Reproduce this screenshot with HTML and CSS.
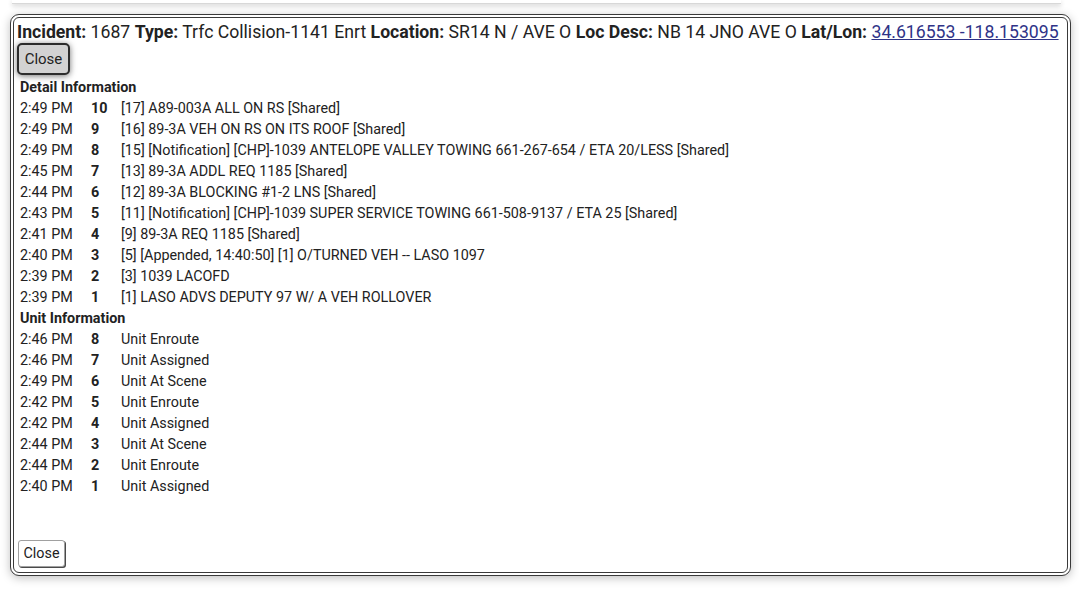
FILE: index.html
```html
<!DOCTYPE html>
<html>
<head>
<meta charset="utf-8">
<link rel="stylesheet" href="styles.css">
</head>
<body>
<div class="topcard"></div>
<div class="dialog">
  <div class="header"><b>Incident:</b> 1687 <b>Type:</b> Trfc Collision-1141 Enrt <b>Location:</b> SR14 N / AVE O <b>Loc Desc:</b> NB 14 JNO AVE O <b>Lat/Lon:</b> <a href="#" class="ll">34.616553 -118.153095</a></div>
  <div class="btnrow"><button class="close-top">Close</button></div>
  <div class="info">
    <div class="title">Detail Information</div>
    <div class="grid">
      <span>2:49 PM</span><b>10</b><span>[17] A89-003A ALL ON RS [Shared]</span>
      <span>2:49 PM</span><b>9</b><span>[16] 89-3A VEH ON RS ON ITS ROOF [Shared]</span>
      <span>2:49 PM</span><b>8</b><span>[15] [Notification] [CHP]-1039 ANTELOPE VALLEY TOWING 661-267-654 / ETA 20/LESS [Shared]</span>
      <span>2:45 PM</span><b>7</b><span>[13] 89-3A ADDL REQ 1185 [Shared]</span>
      <span>2:44 PM</span><b>6</b><span>[12] 89-3A BLOCKING #1-2 LNS [Shared]</span>
      <span>2:43 PM</span><b>5</b><span>[11] [Notification] [CHP]-1039 SUPER SERVICE TOWING 661-508-9137 / ETA 25 [Shared]</span>
      <span>2:41 PM</span><b>4</b><span>[9] 89-3A REQ 1185 [Shared]</span>
      <span>2:40 PM</span><b>3</b><span>[5] [Appended, 14:40:50] [1] O/TURNED VEH -- LASO 1097</span>
      <span>2:39 PM</span><b>2</b><span>[3] 1039 LACOFD</span>
      <span>2:39 PM</span><b>1</b><span>[1] LASO ADVS DEPUTY 97 W/ A VEH ROLLOVER</span>
    </div>
    <div class="title">Unit Information</div>
    <div class="grid">
      <span>2:46 PM</span><b>8</b><span>Unit Enroute</span>
      <span>2:46 PM</span><b>7</b><span>Unit Assigned</span>
      <span>2:49 PM</span><b>6</b><span>Unit At Scene</span>
      <span>2:42 PM</span><b>5</b><span>Unit Enroute</span>
      <span>2:42 PM</span><b>4</b><span>Unit Assigned</span>
      <span>2:44 PM</span><b>3</b><span>Unit At Scene</span>
      <span>2:44 PM</span><b>2</b><span>Unit Enroute</span>
      <span>2:40 PM</span><b>1</b><span>Unit Assigned</span>
    </div>
  </div>
  <div class="footer"><button class="close-bottom">Close</button></div>
</div>
</body>
</html>
```
FILE: styles.css
```css
html, body {
  margin: 0;
  padding: 0;
  background: #ffffff;
}
body {
  font-family: Roboto, "Liberation Sans", sans-serif;
  color: #222;
  height: 589px;
  overflow: hidden;
}
.topcard {
  height: 3px;
  margin: 0 18px 0 12px;
  background: #fff;
  border-bottom: 1px solid #d8d8d8;
  box-shadow: 0 2px 5px rgba(0,0,0,0.18);
}
.dialog {
  box-sizing: border-box;
  margin: 10px 8px 0 10px;
  height: 562px;
  border: 4px double #3a3a3a;
  border-radius: 9px;
  background: #fff;
  box-shadow: 0 2px 10px rgba(0,0,0,0.25);
  padding: 4px 6px 5px 3px;
  display: flex;
  flex-direction: column;
}
.header {
  font-size: 17.65px;
  line-height: 21px;
  white-space: nowrap;
}
.header b { font-weight: 700; }
.ll {
  color: #2f3387;
  text-decoration: underline;
}
.btnrow { display: flex; }
.close-top {
  font-family: Roboto, "Liberation Sans", sans-serif;
  font-size: 15px;
  color: #222;
  width: 53px;
  height: 32px;
  padding: 0;
  background: #d2d2d2;
  border: 2px solid #2c2c2c;
  border-radius: 5px;
  box-shadow: 0 1px 6px rgba(0,0,0,0.55);
}
.info {
  margin-top: 2px;
  padding-left: 3px;
  font-size: 14.35px;
  line-height: 21px;
}
.title { font-weight: 700; }
.grid {
  display: grid;
  grid-template-columns: 71px 30px auto;
}
.grid b { font-weight: 700; }
.footer {
  margin-top: auto;
  display: flex;
}
.close-bottom {
  font-family: Roboto, "Liberation Sans", sans-serif;
  font-size: 14.35px;
  color: #222;
  margin-left: 1px;
  width: 47px;
  height: 27px;
  padding: 0;
  background: #fff;
  border: 1px solid #a0a0a0;
  border-radius: 3px;
  box-shadow: 1px 1px 0 #4a4a4a;
}
```
